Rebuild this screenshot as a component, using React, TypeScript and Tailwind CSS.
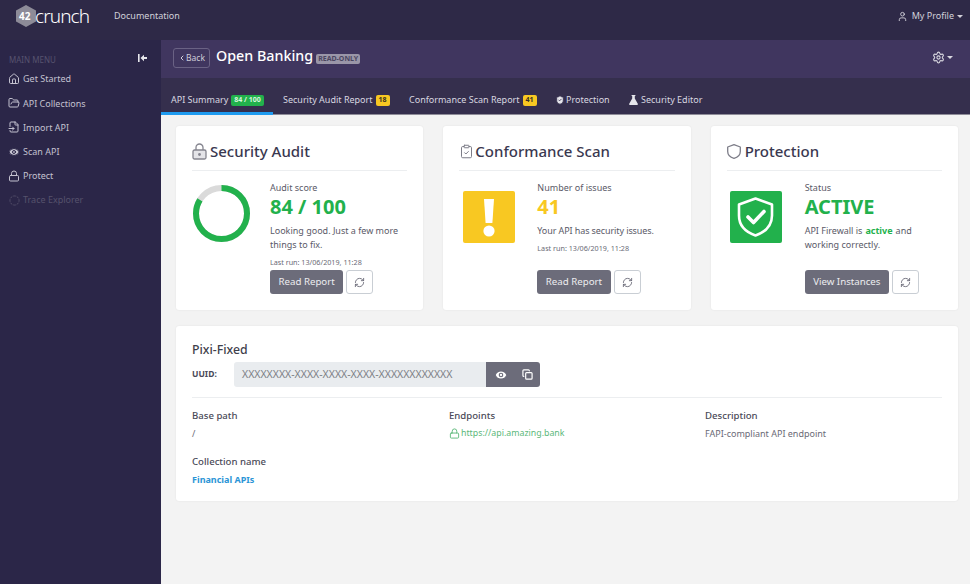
import { ChevronLeft, Copy, Eye, FileInput, FolderOpen, Home, Lock, RefreshCw, Settings, ShieldCheck, User, ClipboardCheck, CircleDashed } from "lucide-react";
import type { ReactNode } from "react";

const MENU = [
  { label: "Get Started", icon: <Home size={12} /> },
  { label: "API Collections", icon: <FolderOpen size={12} /> },
  { label: "Import API", icon: <FileInput size={12} /> },
  { label: "Scan API", icon: <Eye size={14} fill="#c4c2d0" stroke="#2b2648" /> },
  { label: "Protect", icon: <Lock size={12} /> },
];

function Caret() {
  return <span className="inline-block border-x-[3px] border-t-[3px] border-x-transparent border-t-current align-middle" />;
}

function Badge({ children, color }: { children: ReactNode; color: string }) {
  return (
    <span className={`ml-[3px] inline-flex h-[11px] items-center rounded-[2px] px-[3px] text-[7px] font-bold ${color}`}>
      {children}
    </span>
  );
}

function Tab({ children, active, width }: { children: ReactNode; active?: boolean; width: string }) {
  return (
    <div className={`flex h-[37px] items-center border-b-[3px] pt-[10px] text-[9px] text-[#d9d8e0] ${width} ${active ? "border-[#1f9bf0]" : "border-transparent"}`}>
      {children}
    </div>
  );
}

function RefreshButton() {
  return (
    <button className="flex h-6 w-[27px] items-center justify-center rounded-[3px] border border-[#c9ced4] bg-white text-[#6b6b78]">
      <RefreshCw size={11} />
    </button>
  );
}

function PadlockIcon() {
  return (
    <svg width="15" height="17" viewBox="0 0 15 17" fill="none" className="text-[#85858f]">
      <path d="M4 7V4.5a3.5 3.5 0 0 1 7 0V7" stroke="currentColor" strokeWidth="1.3" />
      <rect x="1" y="7" width="13" height="9" rx="1.5" fill="#e4e4e8" stroke="currentColor" strokeWidth="1.3" />
      <circle cx="7.5" cy="11.5" r="1.4" fill="currentColor" />
    </svg>
  );
}

function Card({ icon, title, graphic, children, action }: { icon: ReactNode; title: string; graphic: ReactNode; children: ReactNode; action: string }) {
  return (
    <div className="flex h-[184px] flex-1 flex-col rounded-[3px] bg-white px-4 shadow-[0_0_2px_rgba(0,0,0,0.08)]">
      <div className="flex h-[45px] shrink-0 items-center gap-[3px] border-b border-[#eceef0] pt-[6px] text-[#3a3850]">
        {icon}
        <span className="text-[15px] font-medium">{title}</span>
      </div>
      <div className="flex flex-1">
        <div className="w-[78px] shrink-0">{graphic}</div>
        <div className="flex flex-1 flex-col pt-[10px]">
          <div className="flex flex-col">{children}</div>
          <div className="mt-auto mb-4 flex gap-[3px]">
            <button className="flex h-6 items-center rounded-[3px] bg-[#6c6c7a] px-[8.5px] text-[9.7px] text-[#ececf0]">{action}</button>
            <RefreshButton />
          </div>
        </div>
      </div>
    </div>
  );
}

function Field({ label, children }: { label: string; children: ReactNode }) {
  return (
    <div>
      <div className="text-[9.6px] font-medium leading-[15px] text-[#4a4a58]">{label}</div>
      <div className="mt-[3px] flex h-[15px] items-center text-[9px] text-[#6a6a76]">{children}</div>
    </div>
  );
}

export default function App() {
  return (
    <div className="flex h-[584px] w-[970px] flex-col overflow-hidden bg-[#f3f3f3] font-['Noto_Sans',sans-serif]">
      <header className="flex h-10 shrink-0 items-center bg-[#2e2947] pb-2 pr-[7px] text-[#d2d1da]">
        <div className="ml-[15px] flex w-[99px] items-center">
          <svg width="22" height="24" viewBox="0 0 22 24" className="shrink-0">
            <polygon points="11,1 21,6.5 21,17.5 11,23 1,17.5 1,6.5" fill="#8d8b98" />
          </svg>
          <span className="-ml-[18px] w-[17px] text-[10px] font-bold text-white">42</span>
          <span className="-ml-[1px] text-[19px] font-light leading-none tracking-[-0.9px] text-white">crunch</span>
        </div>
        <span className="text-[9px]">Documentation</span>
        <div className="ml-auto flex items-center text-[9px]">
          <User size={11} />
          <span className="ml-1 mr-[3px]">My Profile</span>
          <Caret />
        </div>
      </header>
      <div className="flex min-h-0 flex-1">
        <aside className="w-[161px] shrink-0 bg-[#2b2648] px-2 text-[#c4c2d0]">
          <div className="flex h-[27px] items-center justify-between pr-[6px] pt-[7px]">
            <span className="pl-[1px] pt-[6px] text-[8px] text-[#57536f]">MAIN MENU</span>
            <svg width="9" height="8" viewBox="0 0 9 8" fill="#e6e6ec" className="mt-[1px]">
              <rect x="0" y="0" width="1.6" height="8" />
              <path d="M2.5 4 6 0.8V3h3v2H6v2.2z" />
            </svg>
          </div>
          <nav>
            {MENU.map((item) => (
              <div key={item.label} className="flex h-[24.2px] items-center gap-[3px] text-[9px]">
                <span className="flex w-3 justify-center">{item.icon}</span>
                {item.label}
              </div>
            ))}
            <div className="flex h-[24.2px] items-center gap-[3px] text-[9px] text-[#56526c]">
              <span className="flex w-3 justify-center">
                <CircleDashed size={11} />
              </span>
              Trace Explorer
            </div>
          </nav>
        </aside>
        <main className="flex min-w-0 flex-1 flex-col">
          <div className="flex h-[38px] shrink-0 items-center bg-[#40365f] pb-[2px] pl-[12px] pr-[17px] text-white">
            <button className="flex h-5 w-[37px] items-center justify-center rounded-[3px] border border-[#6a6284] text-[8.5px] text-[#cfcdd9]">
              <ChevronLeft size={8} strokeWidth={3} />
              Back
            </button>
            <h1 className="ml-[6px] -mt-[3px] text-[14.3px] font-medium leading-none">Open Banking</h1>
            <span className="ml-[3px] mt-[1px] rounded-[2px] bg-[#9a96a8] px-[2px] text-[7px] font-bold leading-[10px] text-[#4a4560]">READ-ONLY</span>
            <div className="ml-auto -mt-[2px] flex items-center gap-[2px] text-[#d9d8e0]">
              <Settings size={13} />
              <Caret />
            </div>
          </div>
          <div className="flex h-[37px] shrink-0 items-start border-b border-[#8f8d99] bg-[#352f4d]">
            <Tab active width="w-[112px] pl-[10px]">
              API Summary<Badge color="bg-[#22b14c] text-[#d8f5de]">84 / 100</Badge>
            </Tab>
            <Tab width="w-[125px] pl-[10px]">
              Security Audit Report<Badge color="bg-[#f8c822] text-[#3a3020]">18</Badge>
            </Tab>
            <Tab width="w-[146px] pl-[11px]">
              Conformance Scan Report<Badge color="bg-[#f8c822] text-[#3a3020]">41</Badge>
            </Tab>
            <Tab width="w-[74px] pl-[11px] gap-[1px]">
              <ShieldCheck size={10} fill="#e6e6ec" stroke="#352f4d" />
              Protection
            </Tab>
            <Tab width="w-[95px] pl-[11px] gap-[3px]">
              <svg width="9" height="10" viewBox="0 0 9 10" fill="#e6e6ec" className="shrink-0">
                <path d="M2.6 0h3.8v.9h-.6v2.7L8.8 8.8c.3.6-.1 1.2-.7 1.2H.9c-.6 0-1-.6-.7-1.2l3-5.2V.9h-.6z" />
              </svg>
              Security Editor
            </Tab>
          </div>
          <div className="pl-[15px] pr-[12px] pt-[11px]">
            <div className="flex gap-5">
              <Card
                icon={<PadlockIcon />}
                title="Security Audit"
                action="Read Report"
                graphic={
                  <svg width="57" height="57" viewBox="0 0 57 57" className="ml-[1px] mt-[14px]">
                    <circle cx="28.5" cy="28.5" r="25.5" fill="none" stroke="#dadada" strokeWidth="6" />
                    <circle cx="28.5" cy="28.5" r="25.5" fill="none" stroke="#22b14c" strokeWidth="6" pathLength="100" strokeDasharray="84 100" transform="rotate(-90 28.5 28.5)" />
                  </svg>
                }
              >
                <span className="text-[9px] leading-[13px] text-[#5a5a68]">Audit score</span>
                <span className="text-[20px] font-bold leading-[25px] text-[#22b14c]">84 / 100</span>
                <span className="mt-[5px] text-[9px] leading-[14px] text-[#5a5a68]">Looking good. Just a few more things to fix.</span>
                <span className="mt-[5px] text-[7.2px] leading-[11px] text-[#6a6a76]">Last run: 13/06/2019, 11:28</span>
              </Card>
              <Card
                icon={<ClipboardCheck size={15} strokeWidth={1.6} className="-mr-[2px] text-[#7d7d88]" />}
                title="Conformance Scan"
                action="Read Report"
                graphic={
                  <div className="ml-1 mt-5 flex h-[52px] w-[52px] items-center justify-center rounded-[2px] bg-[#f8c822]">
                    <svg width="12" height="39" viewBox="0 0 12 39" fill="white">
                      <path d="M1 1h10l-1.6 24H2.6z" />
                      <circle cx="6" cy="33" r="5.6" />
                    </svg>
                  </div>
                }
              >
                <span className="text-[9px] leading-[13px] text-[#5a5a68]">Number of issues</span>
                <span className="text-[20px] font-bold leading-[25px] text-[#f8c822]">41</span>
                <span className="mt-[5px] text-[9px] leading-[14px] tracking-[-0.1px] text-[#5a5a68]">Your API has security issues.</span>
                <span className="mt-[5px] text-[7.2px] leading-[11px] text-[#6a6a76]">Last run: 13/06/2019, 11:28</span>
              </Card>
              <Card
                icon={
                  <svg width="14" height="15" viewBox="0 0 14 15" fill="none" stroke="#7d7d88" strokeWidth="1.3" strokeLinejoin="round" className="mr-px">
                    <path d="M7 .7 13.3 3v4.5c0 3.3-2.5 5.8-6.3 6.8C3.2 13.3.7 10.8.7 7.5V3z" />
                  </svg>
                }
                title="Protection"
                action="View Instances"
                graphic={
                  <div className="ml-[3px] mt-5 flex h-[52px] w-[52px] items-center justify-center rounded-[2px] bg-[#22b14c]">
                    <svg width="37" height="40" viewBox="0 0 37 40" fill="none" stroke="white">
                      <path d="M18.5 1.5 35 7.5v11c0 9.5-6.5 16.5-16.5 20C8.5 35 2 28 2 18.5v-11z" strokeWidth="2.6" strokeLinejoin="round" />
                      <path d="M11 20l5.5 5.5L27 14.5" strokeWidth="3.6" strokeLinecap="round" strokeLinejoin="round" />
                    </svg>
                  </div>
                }
              >
                <span className="text-[9px] leading-[13px] text-[#5a5a68]">Status</span>
                <span className="text-[20px] font-bold leading-[25px] text-[#22b14c]">ACTIVE</span>
                <div className="mt-[5px] flex gap-[3px] text-[9px] leading-[14px] text-[#5a5a68]">
                  <span>API Firewall is</span>
                  <b className="font-bold text-[#22b14c]">active</b>
                  <span>and</span>
                </div>
                <span className="text-[9px] leading-[14px] text-[#5a5a68]">working correctly.</span>
              </Card>
            </div>
            <section className="mt-4 h-[175px] rounded-[3px] bg-white px-4 pt-[15px] shadow-[0_0_2px_rgba(0,0,0,0.08)]">
              <h2 className="text-[12.3px] font-medium leading-[18px] text-[#3f3f4c]">Pixi-Fixed</h2>
              <div className="mt-[3px] flex h-[25px] items-center">
                <span className="w-[42px] text-[8.5px] font-bold text-[#4a4a58]">UUID:</span>
                <div className="flex h-[25px] w-[252px] items-center rounded-l-[3px] bg-[#e9ecef] pl-2 text-[10.5px] text-[#7c7f86]">XXXXXXXX-XXXX-XXXX-XXXX-XXXXXXXXXXXX</div>
                <div className="flex h-[25px] w-[54px] items-center justify-center gap-[14px] rounded-r-[3px] bg-[#6c6c7a] text-white">
                  <Eye size={14} fill="white" stroke="#6c6c7a" />
                  <Copy size={11} strokeWidth={2.6} />
                </div>
              </div>
              <div className="mt-[10px] grid grid-cols-[257px_256px_1fr] border-t border-[#eceef0] pt-[10px]">
                <Field label="Base path">/</Field>
                <Field label="Endpoints">
                  <span className="flex items-center gap-[1px] text-[8.8px] text-[#5cb87a]">
                    <Lock size={11} />
                    https://api.amazing.bank
                  </span>
                </Field>
                <Field label="Description">FAPI-compliant API endpoint</Field>
              </div>
              <div className="mt-[13px]">
                <Field label="Collection name">
                  <span className="font-bold text-[#2b95d6]">Financial APIs</span>
                </Field>
              </div>
            </section>
          </div>
        </main>
      </div>
    </div>
  );
}
